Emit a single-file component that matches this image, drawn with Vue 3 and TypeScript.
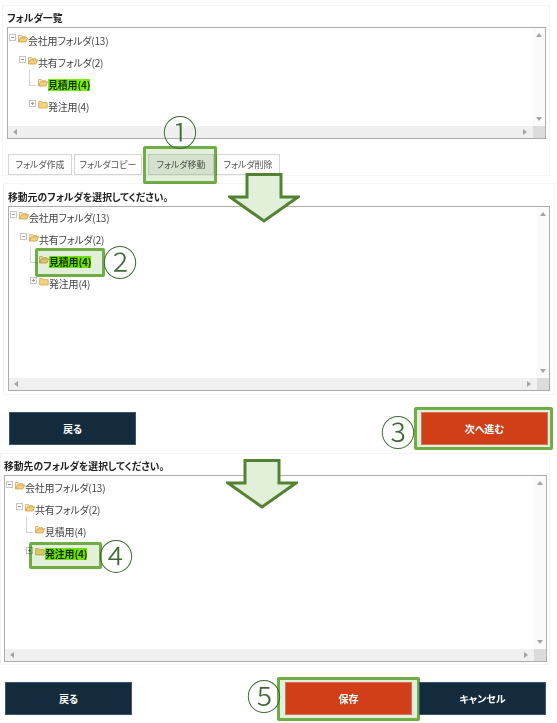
<template>
  <div class="page">
    <template v-for="panel in panels" :key="panel.id">
      <section class="panel" :class="`panel-${panel.id}`">
        <h2 class="panel-title">{{ panel.title }}</h2>
        <div class="tree-box">
          <ul class="tree">
            <li
              v-for="row in panel.rows"
              :key="row.label"
              class="tree-row"
              :style="{ paddingLeft: `${row.depth * 10}px` }"
            >
              <span class="toggle" :class="`toggle-${row.toggle}`"></span>
              <svg class="folder" viewBox="0 0 10 9">
                <path v-if="row.open" d="M0.5 7.8V1.6h3l.8 1h3.2v1.2" fill="#f8ecc6" stroke="#c9a24e" stroke-width=".7" />
                <path v-if="row.open" d="M0.6 8h7.2l1.8-4.2H2.4z" fill="#f6cf7c" stroke="#c9913a" stroke-width=".7" />
                <path v-else d="M.6 8V1.6h3.2l.8 1h4.6V8z" fill="#f7d27c" stroke="#c9a24e" stroke-width=".7" />
              </svg>
              <span class="label" :class="{ selected: row.selected }">{{ row.label }}</span>
            </li>
          </ul>
          <div class="bar-v">
            <span class="arrow arrow-up"></span>
            <span class="arrow arrow-down"></span>
          </div>
          <div class="bar-h">
            <span class="arrow arrow-left"></span>
            <span class="arrow arrow-right"></span>
          </div>
          <div class="bar-corner"></div>
        </div>
        <div v-if="panel.id === 'list'" class="tool-row">
          <button
            v-for="tool in tools"
            :key="tool"
            class="tool-btn"
            :class="{ active: tool === 'フォルダ移動' }"
            type="button"
          >
            {{ tool }}
          </button>
        </div>
      </section>

      <div v-if="panel.id === 'source'" class="action-row action-source">
        <button class="action-btn navy" type="button">戻る</button>
        <button class="action-btn red" type="button">次へ進む</button>
      </div>
      <div v-if="panel.id === 'target'" class="action-row action-target">
        <button class="action-btn navy" type="button">戻る</button>
        <div class="action-group">
          <button class="action-btn red" type="button">保存</button>
          <button class="action-btn navy" type="button">キャンセル</button>
        </div>
      </div>
    </template>

    <!-- annotations drawn over the screenshot -->
    <div v-for="m in marks" :key="m" class="mark" :class="`mark-${m}`"></div>
    <span v-for="n in numbers" :key="n.cls" class="num" :class="n.cls">{{ n.text }}</span>
    <svg v-for="a in ['one', 'two']" :key="a" class="down-arrow" :class="`down-${a}`" viewBox="0 0 72 50">
      <polygon points="19,1.5 53,1.5 53,24 70,24 36,48 2,24 19,24" fill="#e2f0d9" stroke="#548235" stroke-width="3" />
    </svg>
  </div>
</template>

<script setup lang="ts">
interface TreeRow {
  label: string
  depth: number
  toggle: 'minus' | 'plus' | 'leaf'
  open: boolean
  selected?: boolean
}

const buildRows = (selected: string): TreeRow[] => [
  { label: '会社用フォルダ(13)', depth: 0, toggle: 'minus', open: true },
  { label: '共有フォルダ(2)', depth: 1, toggle: 'minus', open: true },
  { label: '見積用(4)', depth: 2, toggle: 'leaf', open: true, selected: selected === '見積用(4)' },
  { label: '発注用(4)', depth: 2, toggle: 'plus', open: false, selected: selected === '発注用(4)' }
]

const panels = [
  { id: 'list', title: 'フォルダ一覧', rows: buildRows('見積用(4)') },
  { id: 'source', title: '移動元のフォルダを選択してください。', rows: buildRows('見積用(4)') },
  { id: 'target', title: '移動先のフォルダを選択してください。', rows: buildRows('発注用(4)') }
]

const tools = ['フォルダ作成', 'フォルダコピー', 'フォルダ移動', 'フォルダ削除']

const marks = ['tool', 'source', 'next', 'target', 'save']

const numbers = [
  { cls: 'num-1', text: '①' },
  { cls: 'num-2', text: '②' },
  { cls: 'num-3', text: '③' },
  { cls: 'num-4', text: '④' },
  { cls: 'num-5', text: '⑤' }
]
</script>

<style>
html,
body {
  background: #fff;
}
</style>

<style scoped>
.page {
  position: relative;
  width: 557px;
  height: 723px;
  overflow: hidden;
  background: #fff;
  color: #333;
  font-family: "Noto Sans CJK JP", "Liberation Sans", sans-serif;
  font-feature-settings: "palt";
  box-sizing: border-box;
  padding-top: 5px;
}

.panel {
  box-sizing: border-box;
  border: 1px solid #f4f4f4;
  display: flex;
  flex-direction: column;
}

.panel-list {
  width: 548px;
  height: 171px;
  margin-left: 2px;
  padding: 5px 3px 0 4px;
}

.panel-source {
  width: 552px;
  height: 212px;
  margin: 7px 0 0 3px;
  padding: 6px 4px 3px 4px;
}

.panel-target {
  width: 550px;
  height: 212px;
  margin-top: 8px;
  padding: 5px 2px 2px 3px;
}

.panel-title {
  margin: 0 0 2px;
  height: 14px;
  line-height: 14px;
  font-size: 9.8px;
  font-weight: 700;
  color: #222;
}

.tree-box {
  flex: 1;
  min-height: 0;
  box-sizing: border-box;
  border: 1.5px solid #adadad;
  display: grid;
  grid-template-columns: 1fr 12px;
  grid-template-rows: 1fr 12px;
}

.panel-list .tree-box {
  flex: none;
  height: 112px;
}

.tree {
  list-style: none;
  margin: 0;
  padding: 0 0 0 1px;
}

.panel-list .tree {
  padding-top: 2px;
}

.panel-target .tree {
  padding-top: 1px;
}

.tree-row {
  display: flex;
  align-items: center;
  height: 22px;
}

.toggle {
  position: relative;
  width: 7px;
  height: 7px;
  margin-right: 2px;
  margin-top: -8px;
  box-sizing: border-box;
  border: 1px solid #c4c4c4;
  flex: none;
}

.toggle-minus::after,
.toggle-plus::after {
  content: "";
  position: absolute;
  left: 1px;
  right: 1px;
  top: 2px;
  height: 1px;
  background: #999;
}

.toggle-plus::before {
  content: "";
  position: absolute;
  top: 1px;
  bottom: 1px;
  left: 2px;
  width: 1px;
  background: #999;
}

.toggle-leaf {
  border-width: 0 0 1px 1px;
  border-color: #d4d4d4;
  height: 16px;
  margin-top: -14px;
}

.folder {
  width: 10px;
  height: 9px;
  flex: none;
  margin-top: -6px;
}

.label {
  font-size: 10px;
  line-height: 12px;
  letter-spacing: -0.2px;
  color: #444;
}

.label.selected {
  background: #7cf000;
  font-weight: 700;
  color: #143300;
}

.bar-v {
  grid-column: 2;
  grid-row: 1;
  display: flex;
  flex-direction: column;
  justify-content: space-between;
  align-items: center;
  padding: 5px 0;
  background: #fafafa;
}

.bar-h {
  grid-column: 1;
  grid-row: 2;
  display: flex;
  justify-content: space-between;
  align-items: center;
  padding: 0 6px 0 5px;
  background: #f0f0f0;
}

.bar-corner {
  grid-column: 2;
  grid-row: 2;
  background: #dcdcdc;
}

.arrow {
  width: 0;
  height: 0;
  border-style: solid;
  border-color: transparent;
}

.arrow-up {
  border-width: 0 3px 4px;
  border-bottom-color: #a3a3a3;
}

.arrow-down {
  border-width: 4px 3px 0;
  border-top-color: #a3a3a3;
}

.arrow-left {
  border-width: 3px 4px 3px 0;
  border-right-color: #a3a3a3;
}

.arrow-right {
  border-width: 3px 0 3px 4px;
  border-left-color: #a3a3a3;
}

.tool-row {
  display: flex;
  gap: 2px;
  margin: 15px 0 0 1px;
}

.tool-btn {
  height: 21px;
  padding: 0;
  box-sizing: border-box;
  background: #fff;
  border: 1px solid #d6d6d6;
  font: inherit;
  font-size: 9px;
  color: #555;
}

.tool-btn:nth-child(1) {
  width: 64px;
}

.tool-btn:nth-child(2) {
  width: 68px;
  margin-right: 4px;
}

.tool-btn:nth-child(3) {
  width: 66px;
}

.tool-btn:nth-child(4) {
  width: 64px;
}

.tool-btn.active {
  background: #f0f0f0;
}

.action-row {
  display: flex;
  justify-content: space-between;
  margin-top: 17px;
}

.action-source {
  margin-left: 9px;
  width: 539px;
}

.action-target {
  margin-left: 5px;
  width: 541px;
}

.action-group {
  display: flex;
  gap: 7px;
}

.action-btn {
  position: relative;
  z-index: 1;
  width: 127px;
  height: 33px;
  padding: 0;
  border: 1px solid transparent;
  font: inherit;
  font-size: 10px;
  font-weight: 700;
  color: #fff;
}

.navy {
  background: #142b3d;
  border-color: #3c566a;
}

.red {
  background: #d03f17;
  border-color: #d9725a;
}

.mark {
  position: absolute;
  box-sizing: border-box;
  border: 3px solid #70ad47;
  border-radius: 2px;
  background: #e2f0d9;
  mix-blend-mode: multiply;
}

.mark-tool {
  left: 143px;
  top: 146px;
  width: 74px;
  height: 38px;
}

.mark-source {
  left: 35px;
  top: 248px;
  width: 70px;
  height: 29px;
}

.mark-next {
  left: 414px;
  top: 407px;
  width: 139px;
  height: 43px;
}

.mark-target {
  left: 29px;
  top: 542px;
  width: 73px;
  height: 27px;
}

.mark-save {
  left: 277px;
  top: 677px;
  width: 143px;
  height: 44px;
}

.num {
  position: absolute;
  width: 36px;
  height: 36px;
  line-height: 36px;
  text-align: center;
  font-size: 35px;
  font-weight: 300;
  font-feature-settings: normal;
  color: #3f6a35;
}

.num-1 {
  left: 162px;
  top: 113px;
}

.num-2 {
  left: 102px;
  top: 243px;
}

.num-3 {
  left: 380px;
  top: 413px;
}

.num-4 {
  left: 98px;
  top: 537px;
}

.num-5 {
  left: 246px;
  top: 677px;
}

.down-arrow {
  position: absolute;
  width: 72px;
  height: 50px;
}

.down-one {
  left: 228px;
  top: 173px;
}

.down-two {
  left: 226px;
  top: 459px;
}
</style>
